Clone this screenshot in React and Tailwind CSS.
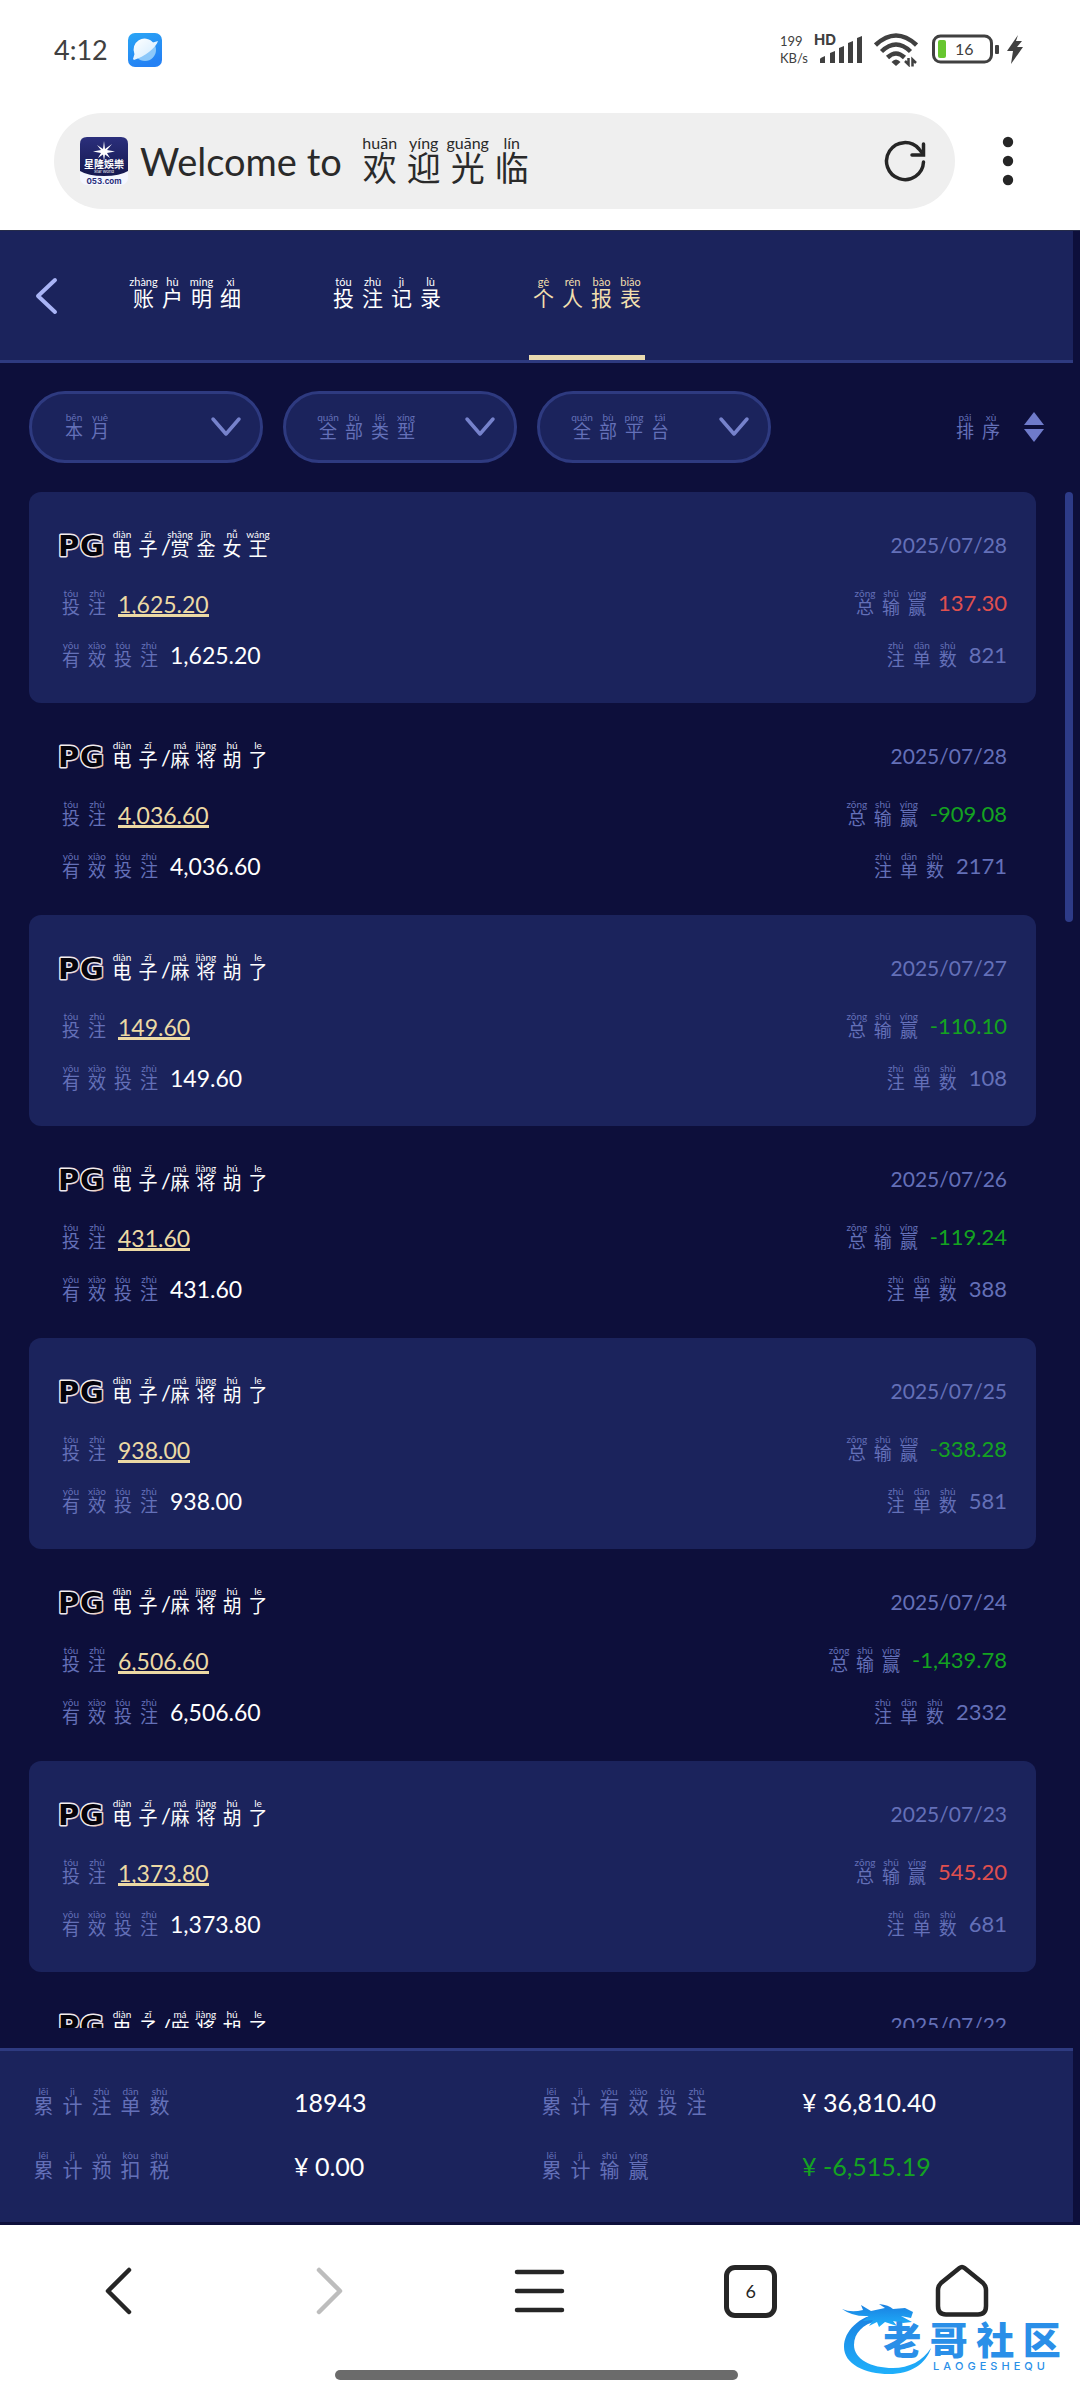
import React from "react";

const FILTERS = [
  { id: "period", label: "时间", text: "本:běn 月:yuè" },
  { id: "type", label: "类型", text: "全:quán 部:bù 类:lèi 型:xíng" },
  { id: "platform", label: "平台", text: "全:quán 部:bù 平:píng 台:tái" },
];

const MAHJONG = "电:diàn 子:zǐ / 麻:má 将:jiàng 胡:hú 了:le";

const RECORDS = [
  { game: "电:diàn 子:zǐ / 赏:shǎng 金:jīn 女:nǚ 王:wáng", date: "2025/07/28", bet: "1,625.20", net: "137.30", count: "821" },
  { game: MAHJONG, date: "2025/07/28", bet: "4,036.60", net: "-909.08", count: "2171" },
  { game: MAHJONG, date: "2025/07/27", bet: "149.60", net: "-110.10", count: "108" },
  { game: MAHJONG, date: "2025/07/26", bet: "431.60", net: "-119.24", count: "388" },
  { game: MAHJONG, date: "2025/07/25", bet: "938.00", net: "-338.28", count: "581" },
  { game: MAHJONG, date: "2025/07/24", bet: "6,506.60", net: "-1,439.78", count: "2332" },
  { game: MAHJONG, date: "2025/07/23", bet: "1,373.80", net: "545.20", count: "681" },
];

const SIZES = {
  url: { cell: "w-11 text-[34px] leading-[34px]", rt: "text-[16px] leading-[16px]" },
  tab: { cell: "w-[29px] text-[21px] leading-[21px]", rt: "text-[11px] leading-[10px]" },
  title: { cell: "w-[26px] text-[19px] leading-[19px]", rt: "text-[10px] leading-[10px]" },
  label: { cell: "w-[26px] text-[18px] leading-[18px]", rt: "text-[10px] leading-[10px]" },
  total: { cell: "w-[29px] text-[20px] leading-[20px]", rt: "text-[10px] leading-[10px]" },
};

/* Chinese text with its pinyin above each character. */
function Pinyin({ text, size }) {
  const s = SIZES[size];
  return (
    <span className="flex shrink-0 items-end pb-[3px]">
      {text.split(" ").map((pair, i) => {
        const [char, reading] = pair.split(":");
        if (!reading) {
          return (
            <span key={i} className="w-[6px] text-center text-[22px] leading-[22px]">
              {char}
            </span>
          );
        }
        return (
          <ruby key={i} className={"flex flex-col-reverse items-center " + s.cell}>
            <span>{char}</span>
            <rt className={"whitespace-nowrap " + s.rt}>{reading}</rt>
          </ruby>
        );
      })}
    </span>
  );
}

function StatusBar() {
  return (
    <header className="flex h-[113px] shrink-0 justify-between pl-[54px] pr-[54px] pt-[33px] text-[#404040]">
      <div className="flex h-[34px] items-center gap-5">
        <span className="text-[27px] leading-[34px]">4:12</span>
        <svg viewBox="0 0 34 34" className="size-[34px]" aria-hidden="true">
          <defs>
            <linearGradient id="app" x1="0" y1="0" x2="0.4" y2="1">
              <stop offset="0" stopColor="#2aa6f5" />
              <stop offset="1" stopColor="#2481f4" />
            </linearGradient>
            <linearGradient id="globe" x1="0" y1="0" x2="1" y2="1">
              <stop offset="0" stopColor="#ffffff" />
              <stop offset="1" stopColor="#cfeaff" />
            </linearGradient>
          </defs>
          <rect width="34" height="34" rx="7" fill="url(#app)" />
          <circle cx="17" cy="17" r="11" fill="#8cc8fa" />
          <path d="M6.500 21A11 11 0 0 1 25 9.500L30 8C28 15 16 24 6 27L5 26Z" fill="url(#globe)" />
        </svg>
      </div>
      <div className="flex h-[34px] items-start">
        <div className="mr-[6px] text-[13px] leading-[17px]">
          <div>199</div>
          <div>KB/s</div>
        </div>
        <svg viewBox="0 0 50 34" className="mr-[10px] h-[34px] w-[50px] overflow-visible" aria-hidden="true">
          <text x="0" y="12" fontFamily="Inter, sans-serif" fontWeight="700" fontSize="15" fill="#404040">HD</text>
          <g fill="#404040">
            <path d="M6 30V26Q6 25 11 23V30Z" />
            <path d="M16 30V20L21 18V30Z" />
            <path d="M25 30V15L30 13V30Z" />
            <path d="M34 30V10L39 8V30Z" />
            <path d="M43 30V5L48 3V30Z" />
          </g>
        </svg>
        <svg viewBox="0 0 44 34" className="mr-[14px] h-[34px] w-11" aria-hidden="true">
          <g fill="none" stroke="#404040" strokeWidth="4.500">
            <path d="M1.500 12Q22 -7 42.500 12" />
            <path d="M7.500 18.500Q22 4.500 36.500 18.500" />
            <path d="M13.500 24.500Q22 16.500 30.500 24.500" />
          </g>
          <path d="M17.500 29Q22 24 26.500 29L22 33Z" fill="#404040" />
          <path d="M31 28L34.500 31.500V25M38.500 33.500V26.500L42 30" fill="none" stroke="#404040" strokeWidth="2.500" />
        </svg>
        <svg viewBox="0 0 94 34" className="h-[34px] w-[94px] overflow-visible" aria-hidden="true">
          <rect x="1.500" y="3" width="58" height="26" rx="7" fill="none" stroke="#404040" strokeWidth="3" />
          <rect x="6" y="7" width="8" height="18" rx="2" fill="#67c62f" />
          <text x="23" y="22" fontFamily="Lato, sans-serif" fontSize="16" fill="#404040">16</text>
          <rect x="63" y="12" width="4" height="9" rx="1" fill="#404040" />
          <path d="M86 2L75 18H81L79 31L91 14H85L90 8H84Z" fill="#404040" />
        </svg>
      </div>
    </header>
  );
}

function AddressBar() {
  return (
    <div className="flex shrink-0 items-center bg-white pb-[21px] pl-[54px] pr-[61px]">
      <div className="flex h-24 flex-1 items-center rounded-full bg-[#efefef] pl-[26px] pr-[28px]">
        <button type="button" className="flex flex-1 items-center text-[#2a2a2a]">
          <svg viewBox="0 0 48 48" className="size-12 shrink-0 overflow-visible" aria-hidden="true">
            <defs>
              <linearGradient id="site" x1="0" y1="0" x2="0" y2="1">
                <stop offset="0" stopColor="#2b2f7c" />
                <stop offset="1" stopColor="#15184f" />
              </linearGradient>
            </defs>
            <rect width="48" height="48" rx="7" fill="#f4f6ff" />
            <path d="M0 34V7Q0 0 7 0H41Q48 0 48 7V34Q40 39 24 39Q8 39 0 34Z" fill="url(#site)" />
            <path d="M24 4L25 12L32 7L27 13L35 14.500L27 16L30 21L25 17.500L24 24L23 17.500L18 21L21 16L13 14.500L21 13L17 8L23 12Z" fill="#fff" />
            <text x="24" y="31" textAnchor="middle" fontFamily="'Noto Sans CJK TC', sans-serif" fontWeight="700" fontSize="10" fill="#fff">星隆娛樂</text>
            <text x="24" y="36" textAnchor="middle" fontFamily="Inter, sans-serif" fontSize="4" fill="#fff">Star World</text>
            <text x="24" y="47" textAnchor="middle" fontFamily="Inter, sans-serif" fontWeight="700" fontSize="8" fill="#2b2f78">053.com</text>
          </svg>
          <span className="ml-3 text-[38px] leading-[48px] whitespace-nowrap">Welcome to</span>
          <span className="ml-4">
            <Pinyin size="url" text="欢:huān 迎:yíng 光:guāng 临:lín" />
          </span>
        </button>
        <button type="button" aria-label="刷新">
          <svg viewBox="0 0 44 44" className="size-11" fill="none" stroke="#262626" strokeWidth="3.500" strokeLinecap="round">
            <path d="M40.500 23A18.500 18.500 0 1 1 36 10L40 15" />
            <path d="M40.500 5V16H29" strokeLinejoin="miter" />
          </svg>
        </button>
      </div>
      <button type="button" aria-label="更多" className="ml-[42px]">
        <svg viewBox="0 0 22 50" className="h-[50px] w-[22px]" fill="#262626">
          <circle cx="11" cy="6" r="5.200" />
          <circle cx="11" cy="25" r="5.200" />
          <circle cx="11" cy="44" r="5.200" />
        </svg>
      </button>
    </div>
  );
}

function ReportTabs() {
  return (
    <nav className="mr-[7px] flex h-[132px] shrink-0 items-stretch border-b-[3px] border-[#2e3a80] bg-[#1b235c] pl-[34px]">
      <button type="button" aria-label="返回" className="mr-[69px]">
        <svg viewBox="0 0 26 38" className="h-[38px] w-[26px]" fill="none" stroke="#a9b4f6" strokeWidth="4" strokeLinecap="round" strokeLinejoin="round">
          <path d="M21 3L4 19L21 35" />
        </svg>
      </button>
      <div className="flex items-stretch gap-[84px] pb-[3px] text-white">
        <a href="#details" className="flex items-center">
          <Pinyin size="tab" text="账:zhàng 户:hù 明:míng 细:xì" />
        </a>
        <a href="#bets" className="flex items-center">
          <Pinyin size="tab" text="投:tóu 注:zhù 记:jì 录:lù" />
        </a>
        <a href="#report" aria-current="page" className="-mb-[3px] flex items-center border-b-[5px] border-[#e8d9b0] pt-[2px] text-[#f1dfae]">
          <Pinyin size="tab" text="个:gè 人:rén 报:bào 表:biǎo" />
        </a>
      </div>
    </nav>
  );
}

function Filters() {
  return (
    <div className="flex shrink-0 items-center gap-5 pt-7 pr-[36px] pb-[29px] pl-[29px] text-[#6470b8]">
      {FILTERS.map((f) => (
        <div key={f.id} className="relative flex h-[72px] w-[234px] items-center justify-between rounded-full border-[3px] border-[#2e3a80] bg-[#1b235c] pr-[18px] pl-[29px]">
          <Pinyin size="label" text={f.text} />
          <svg viewBox="0 0 32 22" className="h-[22px] w-8" fill="none" stroke="#7682cc" strokeWidth="3.500" strokeLinecap="round" strokeLinejoin="round" aria-hidden="true">
            <path d="M3 3L16 18L29 3" />
          </svg>
          <select aria-label={f.label} className="absolute inset-0 opacity-0">
            <option>{f.text.split(" ").map((p) => p.split(":")[0]).join("")}</option>
          </select>
        </div>
      ))}
      <button type="button" className="ml-auto flex items-center gap-5">
        <Pinyin size="label" text="排:pái 序:xù" />
        <svg viewBox="0 0 20 30" className="h-[30px] w-5" fill="#6f7bcb" aria-hidden="true">
          <path d="M10 0L20 13H0Z" />
          <path d="M0 17H20L10 30Z" />
        </svg>
      </button>
    </div>
  );
}

function PgLogo() {
  return (
    <svg viewBox="0 0 47 26" className="h-[26px] w-[47px] overflow-visible" role="img" aria-label="PG">
      <defs>
        <linearGradient id="pg" x1="0" y1="0" x2="1" y2="1">
          <stop offset="0" stopColor="#fff6f0" />
          <stop offset="0.6" stopColor="#e9e6ee" />
          <stop offset="1" stopColor="#f0a878" />
        </linearGradient>
      </defs>
      <g fontFamily="'DejaVu Sans', sans-serif" fontWeight="700" fontSize="29" fill="#05030c" stroke="url(#pg)" strokeWidth="3" strokeLinejoin="round" paintOrder="stroke">
        <text x="0" y="24">P</text>
        <text x="22" y="24">G</text>
      </g>
    </svg>
  );
}

function Record({ record, shaded }) {
  const negative = record.net.startsWith("-");
  return (
    <li className={"shrink-0 px-[29px] pt-[39px] text-[22px] leading-[28px] text-[#6470b8] " + (shaded ? "rounded-xl bg-[#1b235c] pb-[34px]" : "pb-[35px]")}>
      <div className="flex h-7 items-center justify-between">
        <div className="flex items-center gap-1 text-white">
          <PgLogo />
          <Pinyin size="title" text={record.game} />
        </div>
        <time className="text-[21px]">{record.date}</time>
      </div>
      <div className="mt-[30px] flex h-7 items-center justify-between">
        <div className="flex items-center gap-2">
          <Pinyin size="label" text="投:tóu 注:zhù" />
          <a href="#bet" className="h-[27px] border-b-[3px] border-[#ecd9a4] text-[23px] text-[#ecd9a4]">{record.bet}</a>
        </div>
        <div className="flex items-center gap-2">
          <Pinyin size="label" text="总:zǒng 输:shū 赢:yíng" />
          <span className={negative ? "text-[#14a321]" : "text-[#e0504f]"}>{record.net}</span>
        </div>
      </div>
      <div className="mt-6 flex h-7 items-center justify-between">
        <div className="flex items-center gap-2">
          <Pinyin size="label" text="有:yǒu 效:xiào 投:tóu 注:zhù" />
          <span className="text-[23px] text-white">{record.bet}</span>
        </div>
        <div className="flex items-center gap-2">
          <Pinyin size="label" text="注:zhù 单:dān 数:shù" />
          <span>{record.count}</span>
        </div>
      </div>
    </li>
  );
}

/* The row that the list's lower edge cuts through. */
function PartialRecord({ game, date }) {
  return (
    <li className="shrink-0 px-[29px] pt-[39px] text-[#6470b8]">
      <div className="flex h-7 items-center justify-between">
        <div className="flex items-center gap-1 text-white">
          <PgLogo />
          <Pinyin size="title" text={game} />
        </div>
        <time className="text-[21px] leading-[28px]">{date}</time>
      </div>
    </li>
  );
}

function Summary() {
  return (
    <dl className="mt-5 mr-[7px] grid shrink-0 grid-cols-4 items-center gap-y-[34px] border-t-[3px] border-[#2e3a80] bg-[#1b235c] pt-9 pr-7 pb-[41px] pl-[29px] text-[25px] leading-[30px] text-[#6470b8]">
      <dt className="flex h-[30px] items-center"><Pinyin size="total" text="累:lěi 计:jì 注:zhù 单:dān 数:shù" /></dt>
      <dd className="pl-[11px] text-white">18943</dd>
      <dt className="flex h-[30px] items-center"><Pinyin size="total" text="累:lěi 计:jì 有:yǒu 效:xiào 投:tóu 注:zhù" /></dt>
      <dd className="pl-[11px] text-white">¥ 36,810.40</dd>
      <dt className="flex h-[30px] items-center"><Pinyin size="total" text="累:lěi 计:jì 预:yù 扣:kòu 税:shuì" /></dt>
      <dd className="pl-[11px] text-white">¥ 0.00</dd>
      <dt className="flex h-[30px] items-center"><Pinyin size="total" text="累:lěi 计:jì 输:shū 赢:yíng" /></dt>
      <dd className="pl-[11px] text-[#14a321]">¥ -6,515.19</dd>
    </dl>
  );
}

function Watermark() {
  return (
    <div className="absolute right-[15px] bottom-6 h-[72px] w-[224px]">
      <svg viewBox="0 0 224 72" className="absolute inset-0 size-full" aria-hidden="true">
        <defs>
          <linearGradient id="dragon" x1="0" y1="0" x2="0" y2="1">
            <stop offset="0" stopColor="#1a7fe0" />
            <stop offset="1" stopColor="#1fb0fb" />
          </linearGradient>
        </defs>
        <path d="M40 9C18 12 3 27 3 43C3 60 24 70 48 70C70 70 85 60 90 44C82 57 68 64 52 64C30 64 13 55 13 41C13 29 22 20 36 17Z" fill="url(#dragon)" />
        <path d="M1 5Q10 9 22 6L20 1L30 7L44 4L38 0Q48 1 52 5L64 4L72 8L70 14L60 12L71 18L62 19L52 17L56 22L44 18L38 23L36 18L28 22L32 16L22 17L28 12Q12 13 1 5Z" fill="url(#dragon)" />
      </svg>
      <div className="absolute top-[15px] right-0 grid w-[186px] grid-cols-4 text-center font-['Noto_Sans_CJK_SC',sans-serif] text-[38px] leading-[38px] font-black text-[#2a8fe8]">
        <span>老</span>
        <span>哥</span>
        <span>社</span>
        <span>区</span>
      </div>
      <div className="absolute top-[57px] right-[20px] flex w-[112px] justify-between font-['Inter',sans-serif] text-[11px] leading-[11px] font-medium text-[#2a8fe8]">
        {"LAOGESHEQU".split("").map((c, i) => (
          <span key={i}>{c}</span>
        ))}
      </div>
    </div>
  );
}

function BrowserNav() {
  return (
    <footer className="relative flex h-[175px] shrink-0 flex-col items-center justify-between bg-white px-[13px] pb-5">
      <nav className="grid h-[132px] w-full grid-cols-5 items-center justify-items-center">
        <button type="button" aria-label="后退">
          <svg viewBox="0 0 52 56" className="h-14 w-[52px]" fill="none" stroke="#262626" strokeWidth="4.500" strokeLinecap="round" strokeLinejoin="round">
            <path d="M37 7L16 28L37 49" />
          </svg>
        </button>
        <button type="button" aria-label="前进" disabled>
          <svg viewBox="0 0 52 56" className="h-14 w-[52px]" fill="none" stroke="#bdbdbd" strokeWidth="4.500" strokeLinecap="round" strokeLinejoin="round">
            <path d="M16 7L37 28L16 49" />
          </svg>
        </button>
        <button type="button" aria-label="菜单">
          <svg viewBox="0 0 52 56" className="h-14 w-[52px]" fill="none" stroke="#262626" strokeWidth="4.500" strokeLinecap="round">
            <path d="M3 9H48M3 28H48M3 47H48" />
          </svg>
        </button>
        <button type="button" aria-label="标签页 6" className="flex h-[53px] w-[53px] items-center justify-center rounded-[11px] border-[5px] border-[#262626] text-[18px] leading-none text-[#262626]">
          6
        </button>
        <button type="button" aria-label="主页">
          <svg viewBox="0 0 54 56" className="h-14 w-[54px]" fill="none" stroke="#262626" strokeWidth="4.500" strokeLinejoin="round">
            <path d="M3 27Q3 23 6 20L24.500 5Q27 3 29.500 5L48 20Q51 23 51 27V43Q51 51.500 43 51.500H11Q3 51.500 3 43Z" />
          </svg>
        </button>
      </nav>
      <div className="mr-[7px] h-[10px] w-[403px] rounded-full bg-[#6b6b6b]" />
      <Watermark />
    </footer>
  );
}

export default function App() {
  return (
    <div className="flex h-screen flex-col bg-white font-['Lato','Noto_Sans_CJK_SC',sans-serif]">
      <StatusBar />
      <AddressBar />
      <main className="flex min-h-0 flex-1 flex-col border-t border-[#262c4a] bg-[#0d0f3b] pb-[3px]">
        <ReportTabs />
        <Filters />
        <div className="flex min-h-0 flex-1 justify-between pr-[7px] pl-[29px]">
          <ul className="mr-[29px] flex min-w-0 flex-1 flex-col overflow-hidden">
            {RECORDS.map((r, i) => (
              <Record key={i} record={r} shaded={i % 2 === 0} />
            ))}
            <PartialRecord game={MAHJONG} date="2025/07/22" />
          </ul>
          <div className="h-[28%] w-2 rounded-full bg-[#2d3b88]" />
        </div>
        <Summary />
      </main>
      <BrowserNav />
    </div>
  );
}
